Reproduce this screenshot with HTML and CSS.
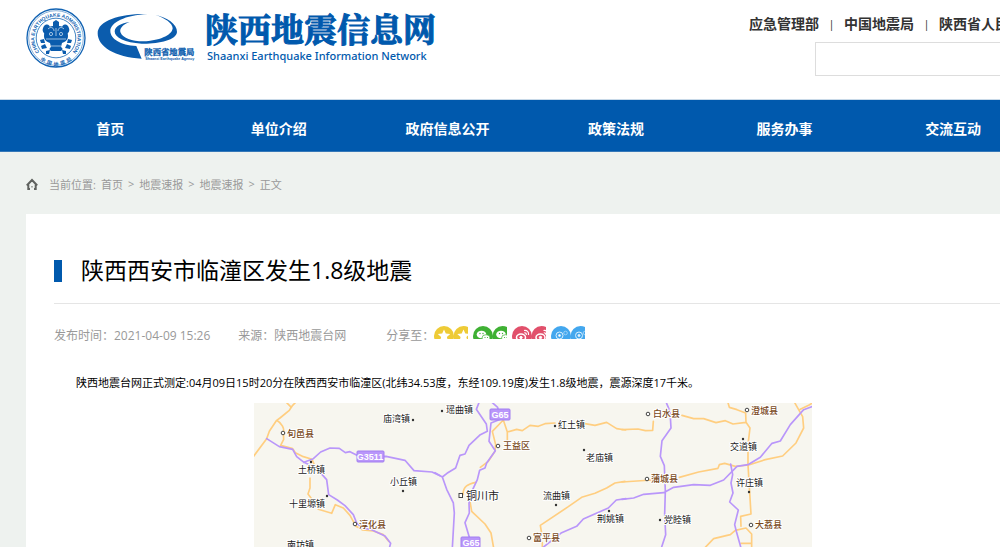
FILE: index.html
```html
<!DOCTYPE html>
<html lang="zh-CN">
<head>
<meta charset="utf-8">
<title>陕西西安市临潼区发生1.8级地震</title>
<link rel="stylesheet" href="styles.css">
</head>
<body>
<header class="header wrap">
  <div class="brand">
    <svg class="emblem" viewBox="0 0 60 60" role="img" aria-label="中国地震局徽标">
      <defs>
        <path id="ring-top" d="M13.5 44 A21.5 21.5 0 1 1 46.500 44"/>
        <path id="ring-bottom" d="M4.500 32 A25.500 25.500 0 0 0 55.500 32"/>
      </defs>
      <circle cx="30" cy="30" r="29" fill="#fff" stroke="#1263b3" stroke-width="1.300"/>
      <circle cx="30" cy="30" r="27.300" fill="none" stroke="#1263b3" stroke-width=".5"/>
      <circle cx="30" cy="30" r="19.800" fill="none" stroke="#1263b3" stroke-width=".8"/>
      <text class="emblem-en"><textPath href="#ring-top" startOffset="50%" text-anchor="middle">CHINA EARTHQUAKE ADMINISTRATION</textPath></text>
      <text class="emblem-cn"><textPath href="#ring-bottom" startOffset="50%" text-anchor="middle">中&#160;&#160;国&#160;&#160;地&#160;&#160;震&#160;&#160;局</textPath></text>
      <g fill="#0b5cad">
        <path d="M27 14 L30 12 L33 14 L33 18 C38 18 42 22 42 28 C42 32 39 34 36 35 L35 39 C37 40 37 42 35 43 L25 43 C23 42 23 40 25 39 L24 35 C21 34 18 32 18 28 C18 22 22 18 27 18Z"/>
        <path d="M18 18 C21 15 24 17 24 20 L20 26 C16 25 16 21 18 18Z M42 18 C39 15 36 17 36 20 L40 26 C44 25 44 21 42 18Z"/>
        <path d="M14 32l4-1 1 4-4 0z M46 32l-4-1-1 4 4 0z M15 38l4-2 2 4-5 1z M45 38l-4-2-2 4 5 1z M20 43l4-1-1 4-3 0z M40 43l-4-1 1 4 3 0z"/>
      </g>
      <g fill="none" stroke="#fff" stroke-width=".6">
        <path d="M22 21 C25 18 28 20 28 23 M38 21 C35 18 32 20 32 23 M20 31 H40 M25 38 H35"/>
        <circle cx="25" cy="26" r="1.600"/><circle cx="35" cy="26" r="1.600"/><path d="M30 20V28"/>
      </g>
    </svg>
    <svg class="swoosh" viewBox="0 0 306 162" role="img" aria-label="陕西省地震局">
      <g fill="#0b5cad">
        <path d="M158 12 C80 10 8 30 8 70 C8 110 60 142 140 146 C134 132 129 120 124 108 C76 106 46 86 46 63 C46 38 90 15 158 12Z"/>
        <path d="M180 14 C216 22 246 41 246 66 C244 91 190 102 140 101 C90 98 59 84 59 64 C60 49 78 40 104 36 C82 44 72 57 77 68 C84 84 110 93 145 94 C190 93 231 77 233 55 C233 39 210 24 180 14Z"/>
      </g>
      <text class="agency-cn" x="148" y="135">陕西省地震局</text>
      <text class="agency-en" x="151" y="149">Shaanxi Earthquake Agency</text>
    </svg>
    <div class="site">
      <div class="site-name">陕西地震信息网</div>
      <div class="site-sub">Shaanxi Earthquake Information Network</div>
    </div>
  </div>
  <div class="tools">
    <div class="links">
      <a href="#">应急管理部</a><span class="bar">|</span><a href="#">中国地震局</a><span class="bar">|</span><a href="#">陕西省人民政府</a>
    </div>
    <input class="search" type="search" aria-label="搜索">
  </div>
</header>

<nav class="nav">
  <div class="nav-items wrap">
    <a href="#">首页</a><a href="#">单位介绍</a><a href="#">政府信息公开</a><a href="#">政策法规</a><a href="#">服务办事</a><a href="#">交流互动</a>
  </div>
</nav>

<main class="wrap">
  <div class="crumbs">
    <svg class="home" viewBox="0 0 12 12" aria-hidden="true"><path d="M.8 7.500 L6 2 L11.200 7.500 M2.300 6V11H4 M9.700 6V11H8" fill="none" stroke="#5f625f" stroke-width="2"/><path d="M5.500 8h1v1.500h-1z" fill="#5f625f"/></svg>
    <span>当前位置:</span><a href="#">首页</a><span>&gt;</span><a href="#">地震速报</a><span>&gt;</span><a href="#">地震速报</a><span>&gt;</span><span>正文</span>
  </div>

  <article class="panel">
    <h1 class="title">陕西西安市临潼区发生1.8级地震</h1>
    <div class="meta">
      <span class="time">发布时间：2021-04-09 15:26</span>
      <span class="source">来源：陕西地震台网</span>
      <span>分享至：</span>
      <div class="share">
        <a href="#" aria-label="QQ空间"><svg viewBox="0 0 34 13"><g fill="#eecb36"><circle cx="10" cy="10" r="10"/><circle cx="29.500" cy="10" r="10"/></g><path id="star" fill="#fff" d="M10 3.500l1.800 4 4.400.4-3.300 3 1 4.300L10 13l-3.900 2.200 1-4.300-3.300-3 4.400-.4z"/><use href="#star" x="19.500"/></svg></a>
        <a href="#" aria-label="微信"><svg viewBox="0 0 34 13"><g fill="#3fb134"><circle cx="10" cy="10" r="10"/><circle cx="29.500" cy="10" r="10"/></g><g id="chat"><ellipse cx="8.500" cy="8.500" rx="4.800" ry="3.800" fill="#fff"/><ellipse cx="13" cy="12" rx="4" ry="3.300" fill="#fff" stroke="#3fb134" stroke-width=".7"/><g fill="#3fb134"><circle cx="7" cy="7.500" r=".7"/><circle cx="10" cy="7.500" r=".7"/><circle cx="12" cy="11.500" r=".6"/><circle cx="14.500" cy="11.500" r=".6"/></g></g><use href="#chat" x="19.500"/></svg></a>
        <a href="#" aria-label="新浪微博"><svg viewBox="0 0 34 13"><g fill="#e1506b"><circle cx="10" cy="10" r="10"/><circle cx="29.500" cy="10" r="10"/></g><g id="weibo" fill="none" stroke="#fff"><ellipse cx="9" cy="11.500" rx="4.500" ry="3.400" stroke-width="1.500"/><circle cx="9" cy="11.500" r="1.200" fill="#fff"/><path d="M12 4.500c3-.5 5 1.500 4.500 4.500 M12.300 6.800c1.400-.2 2.200.7 2 2" stroke-width="1.200"/></g><use href="#weibo" x="19.500"/></svg></a>
        <a href="#" aria-label="腾讯微博"><svg viewBox="0 0 34 13"><g fill="#43a7ee"><circle cx="10" cy="10" r="10"/><circle cx="29.500" cy="10" r="10"/></g><g id="tweet" fill="none" stroke="#d9effd"><circle cx="8.500" cy="9.500" r="3.500" stroke-width="1"/><circle cx="8.500" cy="9.500" r="1" fill="#fff"/><circle cx="14.500" cy="7" r="1.800" stroke="#9bd0f6" stroke-width="1"/></g><use href="#tweet" x="19.500"/></svg></a>
      </div>
    </div>
    <p class="body">陕西地震台网正式测定:04月09日15时20分在陕西西安市临潼区(北纬34.53度，东经109.19度)发生1.8级地震，震源深度17千米。</p>
    <figure class="figure">
      <svg class="map" viewBox="0 0 558 144" role="img" aria-label="震中附近地图">
        <rect width="558" height="144" fill="#f7f6ef"/>
        <g transform="translate(-4 -5) scale(.3333)" class="roads">
          <path class="minor" d="M10 176 L50 122 58 100 80 67 90 60 118 37 128 22 136 14 M110 14 L124 28 M80 67 C96 76 104 92 100 104 L101 124 92 142 128 152 136 164 160 176 186 184 195 205 M180 240 L180 270 174 288 183 300 M205 334 L245 346 256 320 280 330 300 352 318 385 338 396 370 399 400 410 416 430"/>
          <path class="major" d="M50 122 L88 146 128 154 140 176 162 193 184 203 200 212 230 245 236 290 262 306 285 323 310 350 320 375 336 390 365 395 405 414 422 436 418 450"/>
          <path class="major" d="M162 193 L190 182 212 162 240 150 268 151 286 164 300 161 330 176 408 175 465 187 492 218 546 222 570 233"/>
        </g>
        <g transform="translate(181 -5) scale(.3333)" class="roads">
          <path class="minor" d="M205 66 L172 100 182 140 180 160 160 190 136 208 M205 66 L217 102 M217 102 L245 94 262 98 285 82 310 85 330 77 360 75 M217 102 V130 M450 77 L480 82 515 73 545 92 572 96 M122 253 C100 258 84 264 84 290 M105 310 L110 340 150 378 168 405 176 450 M570 250 L540 255 515 270 480 286 440 298 400 326 316 382 320 406 M322 434 V450"/>
          <path class="major" d="M0 224 L22 237 36 226 62 210 75 172 90 168 102 142 136 110 157 100 154 78 124 34 132 14 M22 237 L35 274 55 315 58 345 52 450"/>
          <path class="major" d="M172 14 L188 28 196 64 168 75 162 130 181 158 155 195 150 210 134 217 127 245 113 275 102 315 103 345 90 374 103 418 M322 450 L380 404 425 385 445 363 520 330 544 306 573 302"/>
        </g>
        <g transform="translate(368 -5) scale(.3333)" class="roads">
          <path class="minor" d="M0 95 L48 93 70 98 92 97 94 70 M180 52 L215 62 245 62 282 74 310 68 333 78 372 73 371 45 345 35 322 28 318 14 M372 73 L384 90 378 140 378 200 387 348 356 355 357 385 M0 252 L90 246 M172 238 L230 222 288 211 292 200 308 196 340 205 380 201 430 185 482 174 522 135 545 90 542 56 518 14 M535 34 L560 22 573 14 M248 450 L275 422 325 410 340 397 372 390 389 408 389 450 M357 436 H388"/>
          <path class="major" d="M133 14 L144 40 147 90 120 128 115 175 127 203 130 280 128 348 131 410 118 450 M0 304 L35 300 65 289 125 284 155 268 215 260 265 262 305 246 345 205 378 200 415 178 450 136 475 129 505 80 545 35 573 25"/>
          <path class="major" d="M326 198 L332 230 327 255 333 285 323 312 349 336 338 380 343 400 357 450"/>
        </g>
        <g class="shields">
          <rect x="103" y="48" width="27" height="11" rx="1"/><text x="116" y="57">G3511</text>
          <rect x="236" y="6" width="20" height="11" rx="1"/><text x="246" y="15">G65</text>
          <rect x="207" y="134" width="19" height="11" rx="1"/><text x="217" y="143">G65</text>
        </g>
        <g class="rings">
          <circle cx="29" cy="30" r="1.800"/><circle cx="101" cy="121" r="1.800"/><circle cx="244" cy="43" r="1.800"/><rect x="205" y="90.500" width="3.500" height="4"/><circle cx="275" cy="135" r="1.800"/><circle cx="394" cy="11" r="1.800"/><circle cx="493" cy="7" r="1.800"/><circle cx="393" cy="76" r="1.800"/><circle cx="497" cy="122" r="1.800"/>
        </g>
        <g class="dots">
          <circle cx="159" cy="17" r="1.200"/><circle cx="57" cy="59" r="1.200"/><circle cx="73" cy="93" r="1.200"/><circle cx="149" cy="88" r="1.200"/><circle cx="188" cy="8" r="1.200"/><circle cx="301" cy="23" r="1.200"/><circle cx="330" cy="47" r="1.200"/><circle cx="302" cy="102" r="1.200"/><circle cx="355" cy="108" r="1.200"/><circle cx="489" cy="36" r="1.200"/><circle cx="495" cy="89" r="1.200"/><circle cx="406" cy="117" r="1.200"/>
        </g>
        <g class="town">
          <text x="129" y="19">庙湾镇</text><text x="44" y="70">土桥镇</text><text x="35" y="104">十里塬镇</text><text x="33" y="145">南坊镇</text><text x="136" y="82">小丘镇</text><text x="192" y="10">瑶曲镇</text><text x="304" y="25">红土镇</text><text x="332" y="58">老庙镇</text><text x="289" y="96">流曲镇</text><text x="343" y="119">荆姚镇</text><text x="476" y="47">交道镇</text><text x="482" y="83">许庄镇</text><text x="410" y="120">党睦镇</text>
        </g>
        <g class="county">
          <text x="33" y="34">旬邑县</text><text x="105" y="125">淳化县</text><text x="249" y="46">王益区</text><text x="279" y="138">富平县</text><text x="399" y="14">白水县</text><text x="497" y="11">澄城县</text><text x="397" y="79">蒲城县</text><text x="501" y="125">大荔县</text>
        </g>
        <text class="city" x="212" y="97">铜川市</text>
      </svg>
    </figure>
  </article>
</main>
</body>
</html>
```
FILE: styles.css
```css
* { box-sizing: border-box; }

body {
  margin: 0;
  overflow-x: hidden;
  background: linear-gradient(#fff 99px, #eef2ef 99px);
  color: #000;
  font-family: "Open Sans", "Noto Sans CJK SC", sans-serif;
}

a { color: inherit; text-decoration: none; }

.wrap {
  max-width: 1232px;
  min-width: 1206px;
  margin: 0 auto;
  padding-left: 26px;
}

/* header */
.header {
  display: flex;
  justify-content: space-between;
  height: 99px;
}
.brand { display: flex; align-items: flex-start; padding-top: 8px; }
.emblem { width: 60px; height: 60px; }
.emblem-en { font: bold 5px "Liberation Sans", sans-serif; fill: #1263b3; }
.emblem-cn { font: bold 5px "Noto Sans CJK SC", sans-serif; fill: #1263b3; }
.swoosh { width: 102px; height: 54px; margin: 2px 0 0 9px; }
.agency-cn { font: bold 25px "Noto Serif CJK SC", "Noto Sans CJK SC", serif; fill: #0b5cad; stroke: #0b5cad; }
.agency-en { font: bold 11px "Liberation Sans", sans-serif; fill: #0b5cad; }
.site { margin-left: 8px; color: #0059ad; white-space: nowrap; }
.site-name {
  font: bold 33px/40px "Noto Serif CJK SC", "Noto Sans CJK SC", serif;
  -webkit-text-stroke: 1px #0059ad;
}
.site-sub { padding: 2px 0 0 2px; font: 500 11px/12px "Noto Sans", sans-serif; }

.tools {
  display: flex;
  flex-direction: column;
  align-items: flex-end;
  width: 457px;
  padding-top: 14px;
}
.links {
  display: flex;
  width: 100%;
  color: #333;
  font-size: 14px;
  font-weight: bold;
  line-height: 20px;
  white-space: nowrap;
}
.bar { width: 25px; font-size: 11px; font-weight: normal; text-align: center; }
.search {
  width: 391px;
  height: 34px;
  margin-top: 8px;
  border: 1px solid #ddd;
  background: #fff;
}

/* navigation */
.nav {
  padding-top: 7px;
  border-top: 1px solid #c8d9e8;
  border-bottom: 1px solid #3578b8;
  background: #0059ad;
}
.nav-items { display: grid; grid-template-columns: repeat(7, 1fr); }
.nav-items a {
  color: #fff;
  font-size: 14px;
  font-weight: bold;
  line-height: 44px;
  text-align: center;
}

/* breadcrumb */
.crumbs {
  display: flex;
  align-items: center;
  gap: 5px;
  height: 62px;
  padding-top: 1px;
  color: #999;
  font-size: 11px;
}
.home { width: 12px; height: 12px; margin-right: 6px; }

/* article */
.panel { padding: 40px 194px 0 28px; background: #fff; }
.title {
  display: flex;
  align-items: center;
  gap: 19px;
  margin: 0;
  padding-bottom: 16px;
  border-bottom: 1px solid #e5e5e5;
  font-size: 23px;
  font-weight: 400;
  line-height: 33px;
}
.title::before { content: ""; width: 8px; height: 22px; background: #0059ad; }
.meta {
  display: flex;
  height: 64px;
  align-items: center;
  color: #999;
  font-size: 12px;
  line-height: 18px;
}
.time { margin-right: 28px; }
.source { margin-right: 40px; }
.share { display: flex; gap: 5px; }
.share a { display: block; width: 34px; height: 13px; margin-bottom: 8px; }
.share svg { display: block; width: 34px; height: 13px; }
.body {
  margin: 0;
  padding: 5px 0 10px;
  font-size: 11px;
  line-height: 20px;
  text-indent: 2em;
}

/* map */
.figure { margin: 0; }
.map { display: block; width: 558px; margin: 0 auto; }
.roads path { fill: none; stroke-linejoin: round; stroke-linecap: round; }
.roads .minor { stroke: #ffce80; stroke-width: 5px; }
.roads .major { stroke: #b996fa; stroke-width: 5px; }
.shields rect { fill: #b996fa; stroke: #a27ff0; }
.shields text { fill: #fff; font: bold 9px "Liberation Sans", sans-serif; text-anchor: middle; }
.rings * { fill: #fff; stroke: #444; stroke-width: 1px; }
.dots { fill: #333; }
.town, .county, .city {
  font-family: "Noto Sans CJK SC", sans-serif;
  paint-order: stroke;
  stroke: #fff;
  stroke-width: 2px;
  stroke-linejoin: round;
}
.town { fill: #222; font-size: 9px; }
.county { fill: #7a4a1c; font-size: 9px; font-weight: 500; }
.city { fill: #222; font-size: 11px; }
```
